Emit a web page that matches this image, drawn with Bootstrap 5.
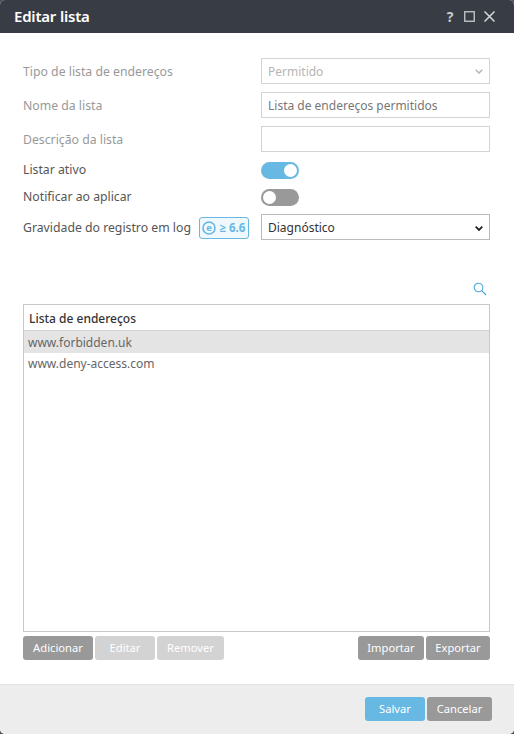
<!DOCTYPE html>
<html lang="pt"><head><meta charset="utf-8">
<link rel="stylesheet" href="https://cdn.jsdelivr.net/npm/bootstrap@5.3.0/dist/css/bootstrap.min.css">
<style>
html,body{height:734px;overflow:hidden;background:#4a4d52;}
body{font-family:"Noto Sans","Open Sans",sans-serif;font-size:12px;color:#333;}
.dlg{width:514px;height:734px;background:#fff;border-radius:5px;overflow:hidden;display:flex;flex-direction:column;}
.dlg-head{height:33px;flex:none;background:#383c44;color:#fff;padding:0 19px 0 14px;}
.dlg-title{font-size:15px;font-weight:600;letter-spacing:-.2px;}
.dlg-body{flex:1;padding:25px 24px 0 23px;display:flex;flex-direction:column;min-height:0;}
.frow{display:flex;align-items:center;}
.flabel{width:238px;flex:none;color:#999;font-size:12.25px;line-height:17px;padding-top:1px;}
.flabel.on{color:#555;}
.flabel.tight{padding-top:0;margin-top:-3px;}
.fctl{width:229px;height:26px;border:1px solid #d3d3d3;background:#fff;padding:1px 6px 0;font-size:12px;display:flex;align-items:center;justify-content:space-between;line-height:1;}
.fctl.off{color:#b5b5b5;}
.fctl.val{color:#777;}
.fctl.act{border-color:#bbb;color:#333;padding-top:2px;}
.sw{width:38px;height:17px;border-radius:9px;display:block;position:relative;background:#999;}
.sw::after{content:"";position:absolute;top:2px;left:2px;width:13px;height:13px;border-radius:50%;background:#fff;}
.sw.on{background:#67b8e3;}
.sw.on::after{left:auto;right:2px;}
.vbadge{display:inline-flex;align-items:center;gap:3px;height:22px;width:50px;justify-content:center;border:1px solid #67b8e3;background:#eef8fd;color:#67b8e3;border-radius:3px;font-weight:700;font-size:11.5px;margin-left:8px;white-space:nowrap;}
.tbl-box{border:1px solid #c8c8c8;height:328px;flex:none;}
.tbl-head{height:26px;border-bottom:1px solid #d3d3d3;padding:2px 5px 0;font-weight:500;color:#333;display:flex;align-items:center;}
.tbl-row{height:22px;padding:0 4px;color:#666;display:flex;align-items:center;}
.tbl-row.sel{background:#e4e4e4;padding-top:1px;}
.gbtn{height:24px;border:0;border-radius:3px;background:#999;color:#fff;font-size:11.2px;padding:0;display:flex;align-items:center;justify-content:center;line-height:1;}
.gbtn.dis{background:#d3d3d3;}
.gbtn.blue{background:#67b8e3;}
.dlg-foot{height:50px;flex:none;background:#ededed;border-top:1px solid #e2e2e2;padding:12px 22px 0 0;}
.hic{font-size:14px;font-weight:700;color:#c9cbce;width:10px;text-align:center;line-height:1;}
.icons{gap:9px;}
.tools{margin-top:42px;height:22px;padding-right:3px;}
</style></head><body>
<div class="dlg">
  <div class="dlg-head d-flex align-items-center justify-content-between">
    <div class="dlg-title">Editar lista</div>
    <div class="d-flex align-items-center icons">
      <span class="hic">?</span>
      <svg width="11" height="11" viewBox="0 0 11 11"><rect x=".75" y=".75" width="9.5" height="9.5" fill="none" stroke="#c9cbce" stroke-width="1.3"/></svg>
      <svg width="11" height="11" viewBox="0 0 11 11"><path d="M.5.5l10 10M10.5.5l-10 10" stroke="#d5d6d8" stroke-width="1.5" fill="none"/></svg>
    </div>
  </div>
  <div class="dlg-body">
    <div class="frow mb-2"><span class="flabel">Tipo de lista de endereços</span>
      <div class="fctl off"><span>Permitido</span><svg width="8" height="5" viewBox="0 0 8 5"><path d="M.7.7L4 4 7.300.7" fill="none" stroke="#b5b5b5" stroke-width="1.5"/></svg></div></div>
    <div class="frow mb-2"><span class="flabel">Nome da lista</span>
      <div class="fctl val">Lista de endereços permitidos</div></div>
    <div class="frow" style="margin-bottom:10px"><span class="flabel">Descrição da lista</span>
      <div class="fctl"></div></div>
    <div class="frow" style="margin-bottom:10px"><span class="flabel on tight">Listar ativo</span><span class="sw on"></span></div>
    <div class="frow mb-2"><span class="flabel on tight">Notificar ao aplicar</span><span class="sw"></span></div>
    <div class="frow"><div class="flabel on d-flex align-items-center"><span>Gravidade do registro em log</span>
      <span class="vbadge"><svg width="14" height="14" viewBox="0 0 14 14"><circle cx="7" cy="7" r="6" fill="none" stroke="#67b8e3" stroke-width="1.6"/><text x="7" y="10" text-anchor="middle" font-size="9.5" font-weight="700" fill="#67b8e3" font-family="Noto Sans">e</text></svg>≥ 6.6</span></div>
      <div class="fctl act"><span>Diagnóstico</span><svg width="8" height="5" viewBox="0 0 8 5"><path d="M.7.7L4 4 7.300.7" fill="none" stroke="#222" stroke-width="1.8"/></svg></div></div>
    <div class="d-flex justify-content-end tools">
      <svg width="14" height="14" viewBox="0 0 14 14"><circle cx="5.5" cy="5.5" r="4.3" fill="none" stroke="#4aa7d8" stroke-width="1.1"/><path d="M8.7 8.7l4.3 4.3" stroke="#4aa7d8" stroke-width="1.2"/></svg>
    </div>
    <div class="tbl-box">
      <div class="tbl-head">Lista de endereços</div>
      <div class="tbl-row sel">www.forbidden.uk</div>
      <div class="tbl-row">www.deny-access.com</div>
    </div>
    <div class="d-flex" style="margin-top:4px;gap:2px">
      <button class="gbtn" style="width:70px">Adicionar</button>
      <button class="gbtn dis" style="width:60px">Editar</button>
      <button class="gbtn dis" style="width:67px">Remover</button>
      <button class="gbtn ms-auto" style="width:66px">Importar</button>
      <button class="gbtn" style="width:64px">Exportar</button>
    </div>
  </div>
  <div class="dlg-foot d-flex justify-content-end" style="gap:2px">
    <button class="gbtn blue" style="width:60px">Salvar</button>
    <button class="gbtn" style="width:65px">Cancelar</button>
  </div>
</div>
</body></html>
